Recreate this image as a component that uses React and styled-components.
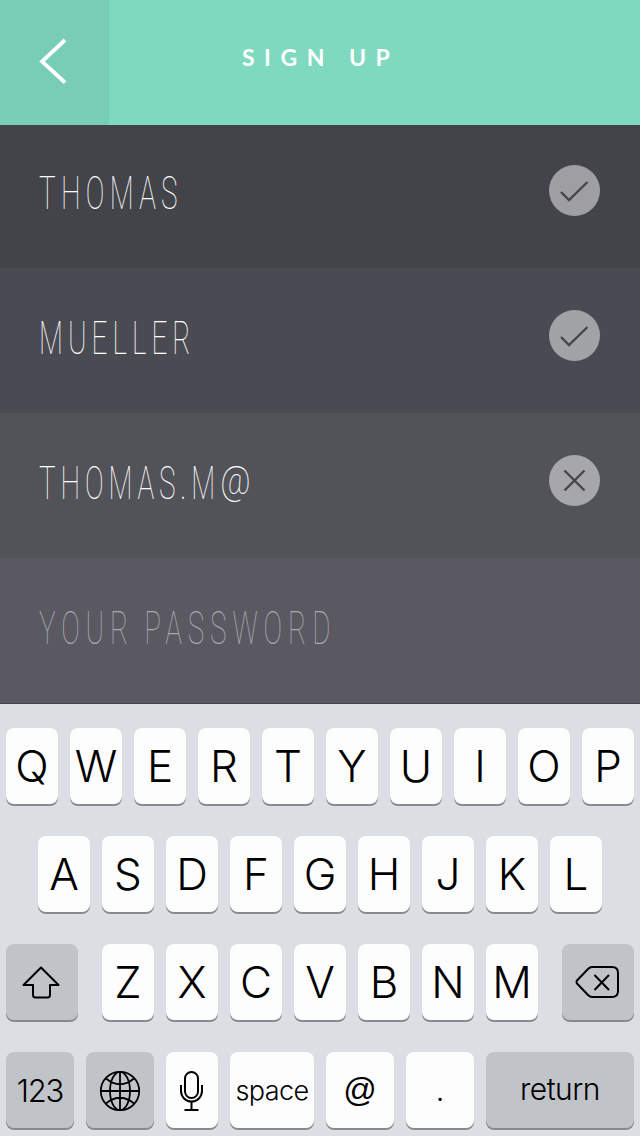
import React from 'react';
import styled, { createGlobalStyle } from 'styled-components';

const GlobalStyle = createGlobalStyle`
  * { box-sizing: border-box; }
  body {
    margin: 0;
    background: #dbdfe3;
    font-family: Inter, "Liberation Sans", sans-serif;
  }
  button {
    border: 0;
    padding: 0;
    margin: 0;
    font-family: inherit;
    color: inherit;
  }
`;

const Screen = styled.div`
  width: 640px;
  height: 1136px;
  overflow: hidden;
  display: flex;
  flex-direction: column;
`;

const Header = styled.header`
  display: grid;
  grid-template-columns: 109px 1fr 109px;
  height: 125px;
  flex: none;
  background: #7fd9bf;
  color: #fff;
`;

const BackButton = styled.button`
  background: #78cdb6;
  padding: 38px 0 0 39px;
  display: flex;
  align-items: flex-start;
`;

const Title = styled.h1`
  margin: 0;
  padding-left: 133px;
  font: 700 23px/115px Lato, sans-serif;
  letter-spacing: 9.5px;
  white-space: nowrap;
`;

const Field = styled.div`
  display: flex;
  justify-content: space-between;
  align-items: flex-start;
  height: ${({ $first }) => ($first ? 143 : 145)}px;
  padding: ${({ $first }) => ($first ? 40 : 42)}px 40px 0 39px;
  flex: none;
  background: ${({ $bg }) => $bg};
`;

// tall and narrow lettering
const FieldText = styled.span`
  font: 100 46.5px/56px Roboto, sans-serif;
  letter-spacing: ${({ $spacing }) => $spacing}px;
  word-spacing: -4px;
  white-space: pre;
  transform: scaleX(0.6);
  transform-origin: left;
  color: ${({ $muted }) => ($muted ? '#a8a8af' : '#fff')};
`;

// the at sign sits higher and wider than the capitals
const AtSign = styled.span`
  display: inline-block;
  font-size: 39px;
  line-height: 1;
  transform: translateY(-5px) scaleX(1.4);
  transform-origin: left;
`;

const Badge = styled.span`
  display: flex;
  width: 51px;
  height: 51px;
  border-radius: 50%;
  background: ${({ $bg }) => $bg};
`;

const Keyboard = styled.div`
  flex: 1;
  display: flex;
  flex-direction: column;
  gap: 32px;
  padding: 24px 6px 0;
  border-top: 1px solid #424148;
  background: #dbdfe3;
`;

const Row = styled.div`
  display: flex;
  justify-content: ${({ $spread }) => ($spread ? 'space-between' : 'center')};
  gap: 12px;
`;

const Group = styled.div`
  display: flex;
  gap: 12px;
`;

const Key = styled.button`
  display: flex;
  align-items: center;
  justify-content: center;
  width: ${({ $w }) => $w || 52}px;
  height: 76px;
  padding-bottom: ${({ $lift }) => $lift || 0}px;
  border-radius: 8px;
  background: ${({ $dark }) => ($dark ? '#c0c3c8' : '#fdfdfd')};
  box-shadow: 0 2px 0 #87898d;
  color: #000;
  font-size: ${({ $size }) => $size || 44}px;
  font-weight: 300;
  line-height: 1;
  letter-spacing: ${({ $tight }) => $tight || 0}px;
`;

const AtKey = styled(Key)`
  font-family: "Liberation Sans", sans-serif;
`;

const MicKey = styled(Key)`
  padding-right: 3px;
`;

const Icon = ({ w, h, sw = 2, color = '#000', children }) => (
  <svg width={w} height={h} viewBox={`0 0 ${w} ${h}`} fill="none" stroke={color} strokeWidth={sw}>
    {children}
  </svg>
);

const fields = [
  { text: 'THOMAS', bg: '#434449', badge: '#9f9fa1', mark: 'check', spacing: 8.8 },
  { text: 'MUELLER', bg: '#4a4a53', badge: '#a2a3a6', mark: 'check', spacing: 8.4 },
  { text: 'THOMAS.M@', bg: '#525259', badge: '#a7a7ab', mark: 'cross', spacing: 8.1 },
  { text: 'YOUR PASSWORD', bg: '#5a5962', muted: true, spacing: 9.8 },
];

const marks = {
  check: <path d="M12 27l8 8L38.500 17" />,
  cross: <path d="M15.500 15.500l20 20M35.500 15.500l-20 20" />,
};

const letters = (str) => str.split('').map((l) => <Key key={l}>{l}</Key>);

const App = () => (
  <>
    <GlobalStyle />
    <Screen>
      <Header>
        <BackButton aria-label="Back">
          <Icon w={30} h={48} sw={3.8} color="#fff"><path d="M26 2L3 23.500L26 44.500" /></Icon>
        </BackButton>
        <Title>SIGN UP</Title>
      </Header>
      {fields.map((f, i) => (
        <Field key={f.text} $bg={f.bg} $first={i === 0}>
          <FieldText $muted={f.muted} $spacing={f.spacing}>
            {f.text.replace('@', '')}
            {f.text.includes('@') && <AtSign>@</AtSign>}
          </FieldText>
          {f.mark && (
            <Badge $bg={f.badge}>
              <Icon w={51} h={51} sw={2.4} color="#45454b">{marks[f.mark]}</Icon>
            </Badge>
          )}
        </Field>
      ))}
      <Keyboard>
        <Row>{letters('QWERTYUIOP')}</Row>
        <Row>{letters('ASDFGHJKL')}</Row>
        <Row $spread>
          <Key $w={72} $dark aria-label="Shift">
            <Icon w={40} h={34}>
              <path strokeLinejoin="round" d="M19 2.500L36.500 20H28V30Q28 32.500 25.500 32.500H13.500Q11 32.500 11 30V20H1.500Z" />
            </Icon>
          </Key>
          <Group>{letters('ZXCVBNM')}</Group>
          <Key $w={72} $dark aria-label="Delete">
            <Icon w={46} h={34}>
              <path strokeLinejoin="round" d="M17 2H37Q43 2 43 8V26Q43 32 37 32H17Q15 32 13 30L2 18.500Q1 17 2 15.500L13 4Q15 2 17 2Z" />
              <path d="M19.500 10L34 25M34 10L19.500 25" />
            </Icon>
          </Key>
        </Row>
        <Row>
          <Key $w={68} $dark $size={31} $tight={-1.2}>123</Key>
          <Key $w={68} $dark aria-label="Next keyboard">
            <Icon w={42} h={42} sw={1.8}>
              <circle cx="21" cy="22" r="19.200" />
              <ellipse cx="21" cy="22" rx="10" ry="19.200" />
              <path d="M21 3V41M2 22H40M7 9.500Q21 21 35 9.500M7 34.500Q21 23 35 34.500" />
            </Icon>
          </Key>
          <MicKey aria-label="Dictate">
            <Icon w={24} h={42}>
              <rect x="6" y="3" width="13" height="26" rx="6.500" />
              <path d="M2 16V22A10.500 10.500 0 0 0 23 22V16M12.500 32.500V41M5.500 41H19.500" />
            </Icon>
          </MicKey>
          <Key $w={84} $size={27} $tight={-0.6}>space</Key>
          <AtKey $w={68} $size={33} $lift={1}>@</AtKey>
          <Key $w={68} $size={32}>.</Key>
          <Key $w={148} $dark $size={30} $tight={-0.5} $lift={3}>return</Key>
        </Row>
      </Keyboard>
    </Screen>
  </>
);

export default App;
